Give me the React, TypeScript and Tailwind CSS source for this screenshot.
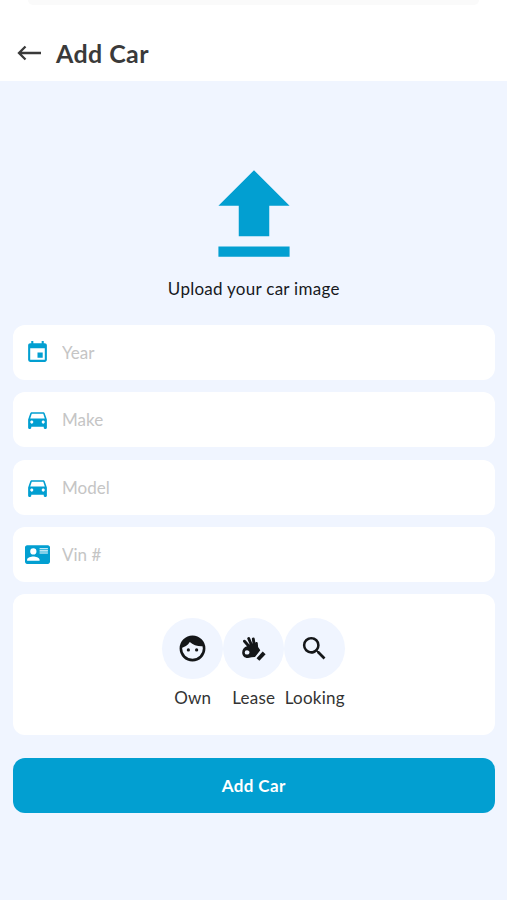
import type { ReactNode } from 'react';
import { MdDirectionsCar, MdEvent, MdSearch } from 'react-icons/md';

interface FieldProps {
    icon: ReactNode;
    placeholder: string;
}

interface OptionProps {
    icon: ReactNode;
    label: string;
}

function UploadIcon() {
    return (
        <svg viewBox="0 0 24 24" className="w-[122px] h-[122px] fill-[#029fd1]">
            <path d="M9 16h6v-6h4l-7-7-7 7h4zm-4 2h14v2H5z" />
        </svg>
    );
}

function CardIcon() {
    return (
        <svg viewBox="0 0 24 24" className="w-[25px] h-[25px] fill-current">
            <path d="M22 3H2C.91 3.04.04 3.91 0 5v14c.04 1.09.91 1.96 2 2h20c1.09-.04 1.96-.91 2-2V5c-.04-1.09-.91-1.96-2-2M14 6h8v1h-8V6m0 2h8v1h-8V8m0 2h8v1h-8v-1M8 6a3 3 0 1 1 0 6 3 3 0 0 1 0-6m6 12H2v-1c0-2 4-3.1 6-3.1s6 1.1 6 3.1v1z" />
        </svg>
    );
}

function FaceIcon() {
    return (
        <svg viewBox="0 0 24 24" className="h-[31px] w-[31px] fill-current">
            <circle cx="12" cy="12" r="9" fill="none" stroke="currentColor" strokeWidth="2" />
            <path d="M2.600 11.800C5.800 11.200 8.500 9.500 9.900 7c2.600 2.500 6.700 3.700 11.300 3.200C20 5.500 16.500 2.500 12 2.500S3 6.500 2.600 11.800z" />
            <circle cx="8.8" cy="13.1" r="1.25" />
            <circle cx="15.2" cy="13.1" r="1.25" />
        </svg>
    );
}

function HandIcon() {
    return (
        <svg viewBox="0 0 24 24" className="w-6 h-6 fill-current">
            {/* fingers */}
            <path
                d="M2.500 4.200 8 10.500M6.700 1.500 10.300 10M11.300 2 12.500 10"
                fill="none"
                stroke="currentColor"
                strokeWidth="2.9"
                strokeLinecap="round"
            />
            {/* palm and thumb ring */}
            <path
                fillRule="evenodd"
                d="M5 9.300 7.500 7.500 12.600 7l1.100-1.900c1.300-.5 2.200.3 2.100 1.400l.3 3.400 2.200 3.300-5.300 6.700-3.300.4-3.700.7C2.800 21.200.2 18.900.2 15.500c0-2.900 2-5.500 4.800-6.200zM4.900 13.200a2.200 2.200 0 1 0 0 4.400c1.700 0 2.600-1 2.600-2.200s-.9-2.200-2.600-2.200z"
            />
            {/* cuff */}
            <path d="m20.700 14.600 2.900 2.600-6.200 6.600-2.900-2.600z" />
        </svg>
    );
}

function Field({ icon, placeholder }: FieldProps) {
    return (
        <label className="flex h-[55px] items-center rounded-xl bg-white pl-3 text-[#029fd1]">
            <span className="w-[25px] shrink-0">{icon}</span>
            <input
                type="text"
                placeholder={placeholder}
                className="ml-3 w-full text-[17px] text-[#222] outline-none placeholder:text-[#c5c5c5]"
            />
        </label>
    );
}

function Option({ icon, label }: OptionProps) {
    return (
        <button className="flex w-[61px] flex-col items-center">
            <span className="flex h-[61px] w-[61px] items-center justify-center rounded-full bg-[#f0f5ff] text-[#151719]">
                {icon}
            </span>
            <span className="mt-[7px] text-[17px] leading-6 tracking-[0.25px] whitespace-nowrap text-[#333]">{label}</span>
        </button>
    );
}

export default function App() {
    return (
        <div className="flex h-[900px] w-full flex-col bg-[#f0f5ff] font-['Lato','Noto_Sans',sans-serif]">
            <header className="flex h-[80.5px] flex-col bg-white">
                <div className="mx-7 h-[5px] shrink-0 rounded-b-lg bg-[#fafafa]" />
                <div className="mt-7 flex h-10 items-center pl-[16.5px] text-[#3a3a3a]">
                    <svg viewBox="0 0 24 16" className="h-4 w-6" fill="none" stroke="currentColor" strokeWidth="2.3">
                        <path d="M24 8H2M8.500 1.500 2 8l6.500 6.500" />
                    </svg>
                    <h1 className="mt-0.5 ml-[15.5px] text-[25px] font-bold tracking-[0.4px]">Add Car</h1>
                </div>
            </header>

            <main className="flex flex-col pt-[74.5px] pr-[12.5px] pl-[13px]">
                <div className="flex flex-col items-center">
                    <UploadIcon />
                    <p className="text-[17px] leading-6 tracking-[0.27px] text-[#17191d]">Upload your car image</p>
                </div>

                <div className="mt-[24.2px] flex flex-col gap-[12.3px]">
                    <Field icon={<MdEvent size={25} />} placeholder="Year" />
                    <Field icon={<MdDirectionsCar size={25} />} placeholder="Make" />
                    <Field icon={<MdDirectionsCar size={25} />} placeholder="Model" />
                    <Field icon={<CardIcon />} placeholder="Vin #" />

                    <div className="flex h-[140.5px] justify-center rounded-xl bg-white pt-6">
                        <Option icon={<FaceIcon />} label="Own" />
                        <Option icon={<HandIcon />} label="Lease" />
                        <Option icon={<MdSearch size={31} />} label="Looking" />
                    </div>
                </div>

                <button className="mt-[23.5px] h-[55px] rounded-xl bg-[#029fd1] text-[17px] font-bold tracking-[0.4px] text-white">
                    Add Car
                </button>
            </main>
        </div>
    );
}
